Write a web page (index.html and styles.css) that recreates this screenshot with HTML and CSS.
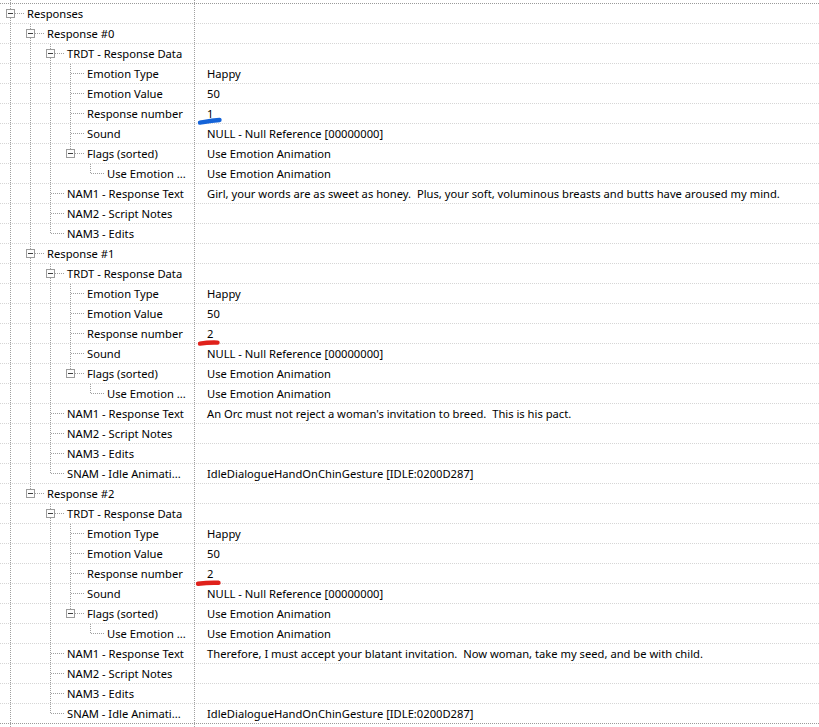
FILE: index.html
```html
<!DOCTYPE html>
<html>
<head>
<meta charset="utf-8">
<link rel="stylesheet" href="styles.css">
</head>
<body>
<div class="tree">
  <div class="stub top"><span class="g pipe"></span></div>

  <div class="row"><div class="label"><span class="own tee"><span class="btn"></span></span><span class="txt">Responses</span></div><div class="val"></div></div>

  <!-- Response #0 -->
  <div class="row"><div class="label"><span class="g pipe"></span><span class="own tee"><span class="btn"></span></span><span class="txt">Response #0</span></div><div class="val"></div></div>
  <div class="row"><div class="label"><span class="g pipe"></span><span class="g pipe"></span><span class="own tee"><span class="btn"></span></span><span class="txt">TRDT - Response Data</span></div><div class="val"></div></div>
  <div class="row"><div class="label"><span class="g pipe"></span><span class="g pipe"></span><span class="g pipe"></span><span class="own tee"></span><span class="txt">Emotion Type</span></div><div class="val">Happy</div></div>
  <div class="row"><div class="label"><span class="g pipe"></span><span class="g pipe"></span><span class="g pipe"></span><span class="own tee"></span><span class="txt">Emotion Value</span></div><div class="val">50</div></div>
  <div class="row"><div class="label"><span class="g pipe"></span><span class="g pipe"></span><span class="g pipe"></span><span class="own tee"></span><span class="txt">Response number</span></div><div class="val">1<svg class="mark mark-blue" width="26" height="10" viewBox="0 0 26 10"><path d="M3 6.6 C7 6 13 4.6 22.5 4" stroke="#1463d8" stroke-width="4.4" stroke-linecap="round" fill="none"/></svg></div></div>
  <div class="row"><div class="label"><span class="g pipe"></span><span class="g pipe"></span><span class="g pipe"></span><span class="own tee"></span><span class="txt">Sound</span></div><div class="val">NULL - Null Reference [00000000]</div></div>
  <div class="row"><div class="label"><span class="g pipe"></span><span class="g pipe"></span><span class="g pipe"></span><span class="own ell"><span class="btn"></span></span><span class="txt">Flags (sorted)</span></div><div class="val">Use Emotion Animation</div></div>
  <div class="row"><div class="label"><span class="g pipe"></span><span class="g pipe"></span><span class="g pipe"></span><span class="g"></span><span class="own ell"></span><span class="txt">Use Emotion ...</span></div><div class="val">Use Emotion Animation</div></div>
  <div class="row"><div class="label"><span class="g pipe"></span><span class="g pipe"></span><span class="own tee"></span><span class="txt">NAM1 - Response Text</span></div><div class="val">Girl, your words are as sweet as honey.  Plus, your soft, voluminous breasts and butts have aroused my mind.</div></div>
  <div class="row"><div class="label"><span class="g pipe"></span><span class="g pipe"></span><span class="own tee"></span><span class="txt">NAM2 - Script Notes</span></div><div class="val"></div></div>
  <div class="row"><div class="label"><span class="g pipe"></span><span class="g pipe"></span><span class="own ell"></span><span class="txt">NAM3 - Edits</span></div><div class="val"></div></div>

  <!-- Response #1 -->
  <div class="row"><div class="label"><span class="g pipe"></span><span class="own tee"><span class="btn"></span></span><span class="txt">Response #1</span></div><div class="val"></div></div>
  <div class="row"><div class="label"><span class="g pipe"></span><span class="g pipe"></span><span class="own tee"><span class="btn"></span></span><span class="txt">TRDT - Response Data</span></div><div class="val"></div></div>
  <div class="row"><div class="label"><span class="g pipe"></span><span class="g pipe"></span><span class="g pipe"></span><span class="own tee"></span><span class="txt">Emotion Type</span></div><div class="val">Happy</div></div>
  <div class="row"><div class="label"><span class="g pipe"></span><span class="g pipe"></span><span class="g pipe"></span><span class="own tee"></span><span class="txt">Emotion Value</span></div><div class="val">50</div></div>
  <div class="row"><div class="label"><span class="g pipe"></span><span class="g pipe"></span><span class="g pipe"></span><span class="own tee"></span><span class="txt">Response number</span></div><div class="val">2<svg class="mark mark-red1" width="26" height="10" viewBox="0 0 26 10"><path d="M3 5.6 C8 4.8 14 4.4 20.5 4.6" stroke="#e0211b" stroke-width="4.4" stroke-linecap="round" fill="none"/></svg></div></div>
  <div class="row"><div class="label"><span class="g pipe"></span><span class="g pipe"></span><span class="g pipe"></span><span class="own tee"></span><span class="txt">Sound</span></div><div class="val">NULL - Null Reference [00000000]</div></div>
  <div class="row"><div class="label"><span class="g pipe"></span><span class="g pipe"></span><span class="g pipe"></span><span class="own ell"><span class="btn"></span></span><span class="txt">Flags (sorted)</span></div><div class="val">Use Emotion Animation</div></div>
  <div class="row"><div class="label"><span class="g pipe"></span><span class="g pipe"></span><span class="g pipe"></span><span class="g"></span><span class="own ell"></span><span class="txt">Use Emotion ...</span></div><div class="val">Use Emotion Animation</div></div>
  <div class="row"><div class="label"><span class="g pipe"></span><span class="g pipe"></span><span class="own tee"></span><span class="txt">NAM1 - Response Text</span></div><div class="val">An Orc must not reject a woman's invitation to breed.  This is his pact.</div></div>
  <div class="row"><div class="label"><span class="g pipe"></span><span class="g pipe"></span><span class="own tee"></span><span class="txt">NAM2 - Script Notes</span></div><div class="val"></div></div>
  <div class="row"><div class="label"><span class="g pipe"></span><span class="g pipe"></span><span class="own tee"></span><span class="txt">NAM3 - Edits</span></div><div class="val"></div></div>
  <div class="row"><div class="label"><span class="g pipe"></span><span class="g pipe"></span><span class="own ell"></span><span class="txt">SNAM - Idle Animati...</span></div><div class="val">IdleDialogueHandOnChinGesture [IDLE:0200D287]</div></div>

  <!-- Response #2 -->
  <div class="row"><div class="label"><span class="g pipe"></span><span class="own ell"><span class="btn"></span></span><span class="txt">Response #2</span></div><div class="val"></div></div>
  <div class="row"><div class="label"><span class="g pipe"></span><span class="g"></span><span class="own tee"><span class="btn"></span></span><span class="txt">TRDT - Response Data</span></div><div class="val"></div></div>
  <div class="row"><div class="label"><span class="g pipe"></span><span class="g"></span><span class="g pipe"></span><span class="own tee"></span><span class="txt">Emotion Type</span></div><div class="val">Happy</div></div>
  <div class="row"><div class="label"><span class="g pipe"></span><span class="g"></span><span class="g pipe"></span><span class="own tee"></span><span class="txt">Emotion Value</span></div><div class="val">50</div></div>
  <div class="row"><div class="label"><span class="g pipe"></span><span class="g"></span><span class="g pipe"></span><span class="own tee"></span><span class="txt">Response number</span></div><div class="val">2<svg class="mark mark-red2" width="28" height="10" viewBox="0 0 28 10"><path d="M3 5.8 C9 5 16 4.4 23.5 4.8" stroke="#e0211b" stroke-width="4.4" stroke-linecap="round" fill="none"/></svg></div></div>
  <div class="row"><div class="label"><span class="g pipe"></span><span class="g"></span><span class="g pipe"></span><span class="own tee"></span><span class="txt">Sound</span></div><div class="val">NULL - Null Reference [00000000]</div></div>
  <div class="row"><div class="label"><span class="g pipe"></span><span class="g"></span><span class="g pipe"></span><span class="own ell"><span class="btn"></span></span><span class="txt">Flags (sorted)</span></div><div class="val">Use Emotion Animation</div></div>
  <div class="row"><div class="label"><span class="g pipe"></span><span class="g"></span><span class="g pipe"></span><span class="g"></span><span class="own ell"></span><span class="txt">Use Emotion ...</span></div><div class="val">Use Emotion Animation</div></div>
  <div class="row"><div class="label"><span class="g pipe"></span><span class="g"></span><span class="own tee"></span><span class="txt">NAM1 - Response Text</span></div><div class="val">Therefore, I must accept your blatant invitation.  Now woman, take my seed, and be with child.</div></div>
  <div class="row"><div class="label"><span class="g pipe"></span><span class="g"></span><span class="own tee"></span><span class="txt">NAM2 - Script Notes</span></div><div class="val"></div></div>
  <div class="row"><div class="label"><span class="g pipe"></span><span class="g"></span><span class="own tee"></span><span class="txt">NAM3 - Edits</span></div><div class="val"></div></div>
  <div class="row last"><div class="label"><span class="g pipe"></span><span class="g"></span><span class="own ell"></span><span class="txt">SNAM - Idle Animati...</span></div><div class="val">IdleDialogueHandOnChinGesture [IDLE:0200D287]</div></div>

  <div class="stub bottom"><span class="g pipe"></span></div>
</div>
</body>
</html>
```
FILE: styles.css
```css
html, body {
  margin: 0;
  padding: 0;
  background: #ffffff;
}

body {
  font-family: "Noto Sans", "Open Sans", sans-serif;
  font-size: 11.2px;
  color: #000000;
  overflow: hidden;
}

.tree {
  width: 819px;
  height: 727px;
  overflow: hidden;
  background-image: repeating-linear-gradient(to bottom, #a0a0a0 0 1px, transparent 1px 2px);
  background-size: 1px 100%;
  background-position: 194px 0;
  background-repeat: no-repeat;
}

.stub {
  display: flex;
}

.stub.top {
  height: 4px;
  background-image: repeating-linear-gradient(to right, #9a9a9a 0 1px, transparent 1px 2px);
  background-size: 100% 1px;
  background-position: 0 3px;
  background-repeat: no-repeat;
}

.stub.top .g,
.stub.bottom .g {
  height: 100%;
}

.stub.bottom {
  height: 4px;
}

.row {
  display: flex;
  height: 20px;
  background-image: repeating-linear-gradient(to right, #d6d6d6 0 1px, transparent 1px 2px);
  background-size: 100% 1px;
  background-position: 0 19px;
  background-repeat: no-repeat;
}

.row.last {
  background-image: repeating-linear-gradient(to right, #9a9a9a 0 1px, transparent 1px 2px);
}

.label {
  width: 195px;
  flex: none;
  display: flex;
  overflow: hidden;
}

.g {
  display: block;
  width: 20px;
  height: 20px;
  flex: none;
}

.own {
  display: block;
  width: 25px;
  height: 20px;
  flex: none;
}

.pipe {
  background-image: repeating-linear-gradient(to bottom, #a0a0a0 0 1px, transparent 1px 2px);
  background-size: 1px 20px;
  background-position: 10px 0;
  background-repeat: no-repeat;
}

.tee {
  background-image:
    repeating-linear-gradient(to right, #a0a0a0 0 1px, transparent 1px 2px),
    repeating-linear-gradient(to bottom, #a0a0a0 0 1px, transparent 1px 2px);
  background-size: 14px 1px, 1px 20px;
  background-position: 11px 9px, 10px 0;
  background-repeat: no-repeat;
}

.ell {
  background-image:
    repeating-linear-gradient(to right, #a0a0a0 0 1px, transparent 1px 2px),
    repeating-linear-gradient(to bottom, #a0a0a0 0 1px, transparent 1px 2px);
  background-size: 14px 1px, 1px 10px;
  background-position: 11px 9px, 10px 0;
  background-repeat: no-repeat;
}

.btn {
  display: block;
  box-sizing: border-box;
  width: 9px;
  height: 9px;
  margin: 5px 0 0 6px;
  border: 1px solid #9c9c9c;
  background-color: #fdfdfd;
  background-image: linear-gradient(#3c3c3c, #3c3c3c);
  background-size: 5px 1px;
  background-position: 1px 3px;
  background-repeat: no-repeat;
}

.txt {
  padding-left: 2px;
  line-height: 19px;
  white-space: pre;
}

.val {
  position: relative;
  padding-left: 12px;
  line-height: 19px;
  white-space: pre;
}

.mark {
  position: absolute;
  display: block;
}

.mark-blue {
  left: 2px;
  top: 12px;
}

.mark-red1 {
  left: 2px;
  top: 14px;
}

.mark-red2 {
  left: 0;
  top: 14px;
}
```
